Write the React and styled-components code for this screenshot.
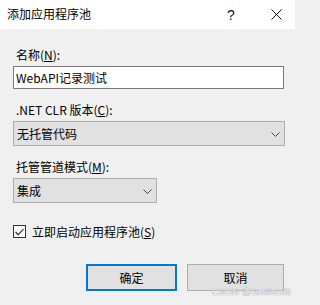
import React from 'react';
import styled, { createGlobalStyle } from 'styled-components';

const GlobalStyle = createGlobalStyle`
  html, body {
    margin: 0;
    padding: 0;
    background: #f0f0f0;
  }
  body {
    font-family: "Noto Sans CJK SC", "Noto Sans", sans-serif;
    font-size: 12px;
    color: #000;
  }
`;

const Dialog = styled.div`
  width: 295px;
  height: 305px;
  background: #f0f0f0;
  position: relative;
  overflow: hidden;
`;

const TitleBar = styled.div`
  height: 29px;
  background: #fff;
  display: flex;
  align-items: center;
  padding-left: 7px;
`;

const Title = styled.div`
  flex: 1;
  line-height: 16px;
  margin-top: -1px;
`;

const TitleButton = styled.div`
  width: ${(p) => p.$w}px;
  display: flex;
  justify-content: center;
  align-items: center;
  font-family: "Liberation Sans", sans-serif;
  font-size: 14px;
  color: #111;
`;

const Body = styled.div`
  padding: 18px 11px 0 13px;
  display: flex;
  flex-direction: column;
`;

const Field = styled.div`
  display: flex;
  flex-direction: column;
  gap: 3px;
  margin-bottom: 13px;
`;

const Label = styled.label`
  line-height: 16px;
  padding-left: 3px;
  height: 16px;
  u {
    text-decoration: underline;
    text-underline-offset: 1px;
  }
`;

const TextBox = styled.div`
  height: 21px;
  border: 1px solid #7a7a7a;
  background: #fff;
  padding-left: 2px;
  display: flex;
  align-items: center;
`;

const Select = styled.div`
  width: ${(p) => p.$w}px;
  height: 23px;
  box-sizing: content-box;
  border: 1px solid #adadad;
  background: #e1e1e1;
  padding-left: 3px;
  display: flex;
  align-items: center;
  justify-content: space-between;
`;

const Chevron = styled.svg`
  width: 9px;
  height: 5px;
  margin-right: 4px;
  margin-top: 1px;
`;

const CheckRow = styled.div`
  display: flex;
  align-items: center;
  gap: 6px;
  height: 13px;
  margin-top: 9px;
`;

const CheckBox = styled.div`
  width: 11px;
  height: 11px;
  border: 1px solid #333;
  background: #fff;
  display: flex;
  align-items: center;
  justify-content: center;
`;

const ButtonRow = styled.div`
  display: flex;
  justify-content: flex-end;
  gap: 10px;
  margin-top: 26px;
`;

const Button = styled.div`
  box-sizing: border-box;
  width: ${(p) => p.$w}px;
  height: 27px;
  background: #e1e1e1;
  border: ${(p) => (p.$default ? '2px solid #0078d7' : '1px solid #adadad')};
  display: flex;
  align-items: center;
  justify-content: center;
  font-size: 12px;
`;

const Watermark = styled.div`
  position: absolute;
  right: 4px;
  bottom: 8px;
  font-family: "Liberation Sans", sans-serif;
  font-size: 9.5px;
  color: #f4f4f4;
  text-shadow: 0 0 1px #999, 0 0 1px #aaa;
  letter-spacing: 0.1px;
`;

const ChevronIcon = () => (
  <Chevron viewBox="0 0 9 5">
    <path d="M0.5 0.5 L4.5 4.5 L8.5 0.5" fill="none" stroke="#444" strokeWidth="1" />
  </Chevron>
);

export default function App() {
  return (
    <>
      <GlobalStyle />
      <Dialog>
        <TitleBar>
          <Title>添加应用程序池</Title>
          <TitleButton $w={54}>?</TitleButton>
          <TitleButton $w={37}>
            <svg width="11" height="11" viewBox="0 0 11 11">
              <path d="M0.5 0.5 L10.5 10.5 M10.5 0.5 L0.5 10.5" stroke="#111" strokeWidth="1" />
            </svg>
          </TitleButton>
        </TitleBar>
        <Body>
          <Field>
            <Label>名称(<u>N</u>):</Label>
            <TextBox>WebAPI记录测试</TextBox>
          </Field>
          <Field>
            <Label>.NET CLR 版本(<u>C</u>):</Label>
            <Select $w={267}>
              <span>无托管代码</span>
              <ChevronIcon />
            </Select>
          </Field>
          <Field>
            <Label>托管管道模式(<u>M</u>):</Label>
            <Select $w={139}>
              <span>集成</span>
              <ChevronIcon />
            </Select>
          </Field>
          <CheckRow>
            <CheckBox>
              <svg width="9" height="8" viewBox="0 0 9 8">
                <path d="M0.5 4 L3.2 6.7 L8.5 1" fill="none" stroke="#222" strokeWidth="1.1" />
              </svg>
            </CheckBox>
            <span>立即启动应用程序池(<u>S</u>)</span>
          </CheckRow>
          <ButtonRow>
            <Button $w={91} $default>确定</Button>
            <Button $w={97}>取消</Button>
          </ButtonRow>
        </Body>
        <Watermark>CSDN @SmileGift</Watermark>
      </Dialog>
    </>
  );
}
